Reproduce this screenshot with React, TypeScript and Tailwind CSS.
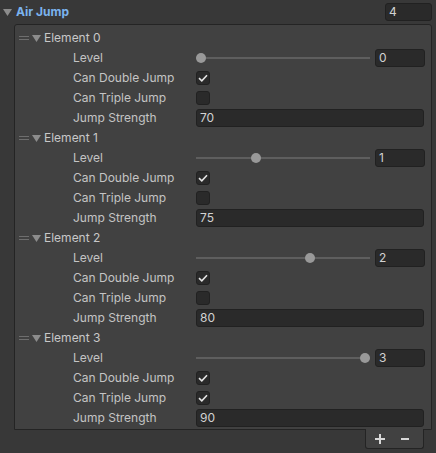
import React from 'react';

type Entry = { level: number; canDouble: boolean; canTriple: boolean; strength: number };

const entries: Entry[] = [
  { level: 0, canDouble: true, canTriple: false, strength: 70 },
  { level: 1, canDouble: true, canTriple: false, strength: 75 },
  { level: 2, canDouble: true, canTriple: false, strength: 80 },
  { level: 3, canDouble: true, canTriple: true, strength: 90 },
];

const MAX_LEVEL = 3;

const Foldout: React.FC<{ className?: string }> = ({ className }) => (
  <svg width="9" height="7" viewBox="0 0 9 7" className={className}>
    <path d="M0 0 H9 L4.5 7 Z" fill="currentColor" />
  </svg>
);

const Check: React.FC<{ on: boolean }> = ({ on }) => (
  <div className="w-[14px] h-[14px] rounded-[3px] bg-[#2a2a2a] border border-[#212121] flex items-center justify-center">
    {on && (
      <svg width="10" height="8" viewBox="0 0 10 8">
        <path d="M1 4.2 L3.8 6.8 L9 1.2" fill="none" stroke="#e4e4e4" strokeWidth="1.6" />
      </svg>
    )}
  </div>
);

const Field: React.FC<{ value: React.ReactNode; className?: string }> = ({ value, className }) => (
  <div
    className={`h-[18px] rounded-[3px] bg-[#2a2a2a] border border-[#212121] pl-[3px] flex items-center text-[#d2d2d2] ${className ?? ''}`}
  >
    {value}
  </div>
);

const Slider: React.FC<{ value: number }> = ({ value }) => (
  <div className="flex items-center w-full">
    <div className="relative w-[174px] h-[20px]">
      <div className="absolute left-0 right-0 top-[9px] h-[2px] bg-[#5e5e5e]" />
      <div
        className="absolute top-[5px] w-[10px] h-[10px] rounded-full bg-[#999999]"
        style={{ left: (value / MAX_LEVEL) * 164 }}
      />
    </div>
    <Field value={value} className="ml-[5px] w-[50px]" />
  </div>
);

const Row: React.FC<{ label: string; children: React.ReactNode }> = ({ label, children }) => (
  <div className="h-[20px] flex items-center">
    <div className="w-[181px] pl-[58px] shrink-0">{label}</div>
    <div className="flex-1 pr-[7px] flex items-center">{children}</div>
  </div>
);

export default function App() {
  return (
    <div
      className="w-[436px] h-[453px] bg-[#383838] text-[#c4c4c4] text-[12px] leading-none overflow-hidden"
      style={{ fontFamily: 'Inter, "Noto Sans", sans-serif' }}
    >
      <div className="h-[24px] flex items-center">
        <Foldout className="ml-[3px] text-[#8c8c8c]" />
        <span className="ml-[4px] font-bold text-[#7bb3ee]">Air Jump</span>
        <Field value="4" className="ml-auto mr-[4px] w-[47px]" />
      </div>

      <div className="ml-[14px] w-[418px] h-[406px] bg-[#414141] border border-[#242424] rounded-t-[3px] pt-[3px]">
        {entries.map((e, i) => (
          <div key={i}>
            <div className="h-[20px] flex items-center">
              <div className="ml-[4px] w-[10px] flex flex-col gap-[2px]">
                <div className="h-px bg-[#6e6e6e]" />
                <div className="h-px bg-[#6e6e6e]" />
              </div>
              <Foldout className="ml-[3px] text-[#8c8c8c]" />
              <span className="ml-[3px] text-[#c8c8c8]">Element {i}</span>
            </div>
            <Row label="Level">
              <Slider value={e.level} />
            </Row>
            <Row label="Can Double Jump">
              <Check on={e.canDouble} />
            </Row>
            <Row label="Can Triple Jump">
              <Check on={e.canTriple} />
            </Row>
            <Row label="Jump Strength">
              <Field value={e.strength} className="w-full" />
            </Row>
          </div>
        ))}
      </div>

      <div className="flex justify-end pr-[12px]">
        <div className="-mt-px w-[59px] h-[20px] bg-[#414141] border-x border-b border-[#242424] rounded-b-[3px] flex items-center pl-[9px] gap-[16px] text-[#d8d8d8]">
          <svg width="10" height="10" viewBox="0 0 10 10">
            <path d="M5 0 V10 M0 5 H10" stroke="currentColor" strokeWidth="2" />
          </svg>
          <svg width="8" height="10" viewBox="0 0 8 10">
            <path d="M0 5 H8" stroke="currentColor" strokeWidth="2" />
          </svg>
        </div>
      </div>
    </div>
  );
}
